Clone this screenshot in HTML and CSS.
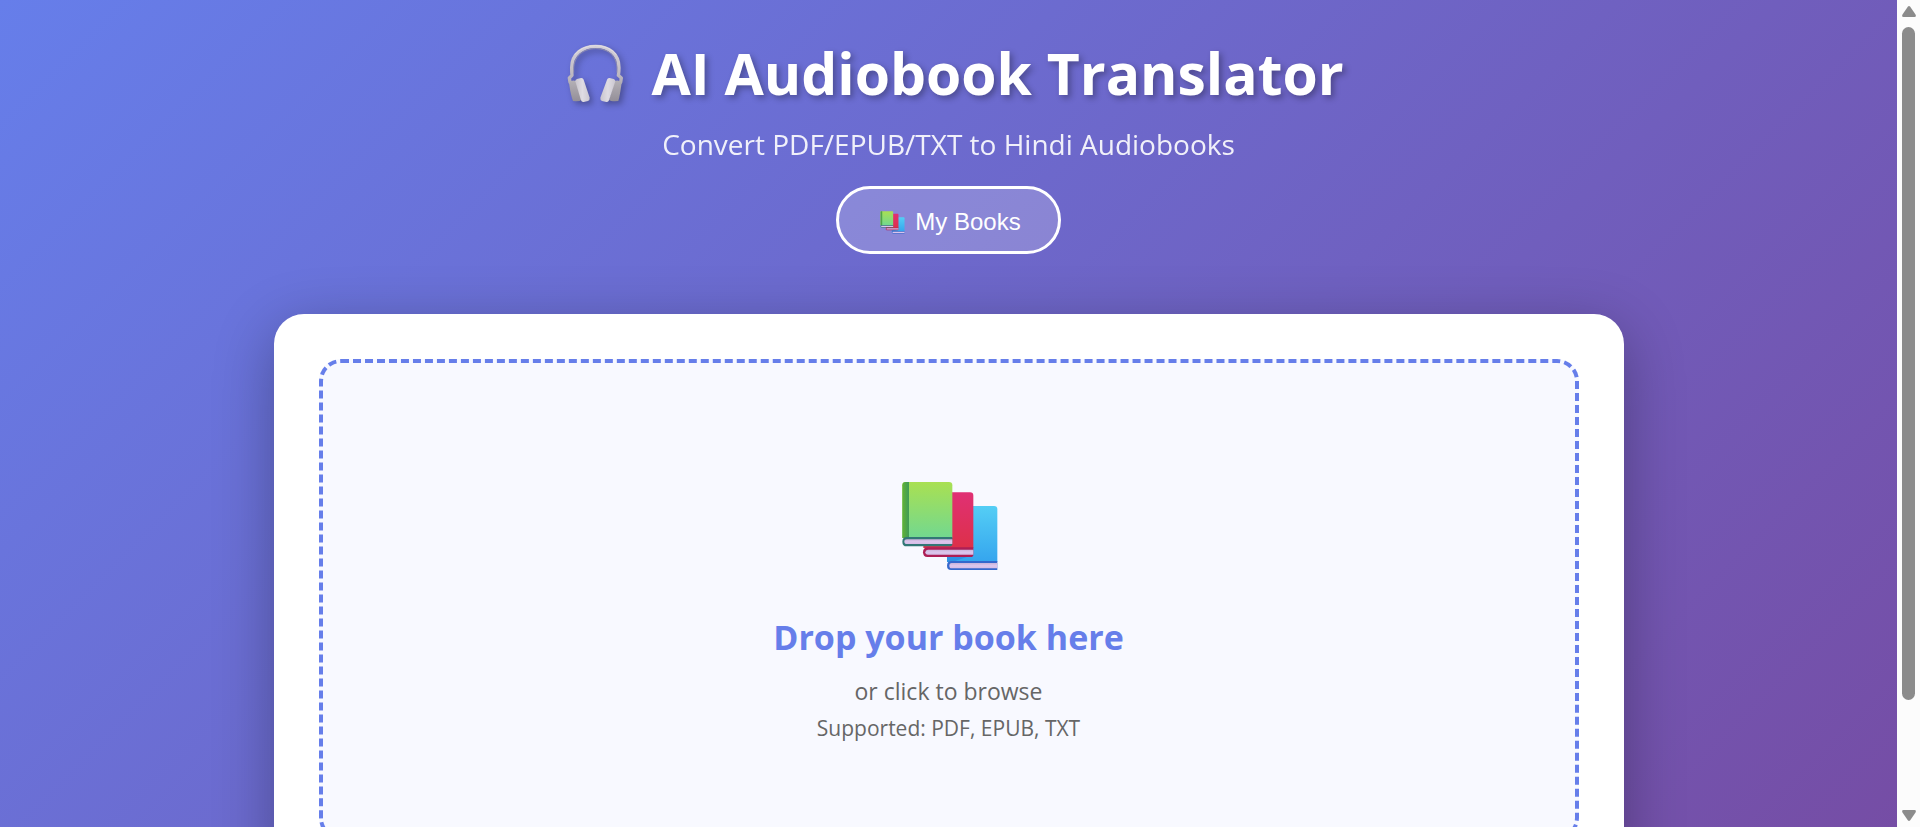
FILE: index.html
```html
<!DOCTYPE html>
<html lang="en">
<head>
<meta charset="utf-8">
<meta name="viewport" content="width=device-width, initial-scale=1">
<title>AI Audiobook Translator</title>
<link rel="stylesheet" href="styles.css">
</head>
<body>
<svg class="defs" aria-hidden="true">
  <defs>
    <linearGradient id="green" x1="0" y1="0" x2="0" y2="1"><stop offset="0" stop-color="#a9e052"/><stop offset="1" stop-color="#72d890"/></linearGradient>
    <linearGradient id="green-spine" x1="0" y1="0" x2="1" y2="0"><stop offset="0" stop-color="#62b236"/><stop offset="1" stop-color="#3f9b57"/></linearGradient>
    <linearGradient id="red" x1="0" y1="0" x2="0" y2="1"><stop offset="0" stop-color="#e03074"/><stop offset="1" stop-color="#dd3049"/></linearGradient>
    <linearGradient id="blue" x1="0" y1="0" x2="0" y2="1"><stop offset="0" stop-color="#54cef5"/><stop offset="1" stop-color="#35a5ee"/></linearGradient>
    <linearGradient id="pages" x1="0" y1="0" x2="0" y2="1"><stop offset="0" stop-color="#c9b3da"/><stop offset=".5" stop-color="#dcc6ec"/><stop offset="1" stop-color="#d5bce6"/></linearGradient>
    <linearGradient id="band" x1="0" y1="0" x2="0" y2="1"><stop offset="0" stop-color="#d3ced6"/><stop offset=".5" stop-color="#c9c4cb"/><stop offset="1" stop-color="#b5b0b8"/></linearGradient>
    <linearGradient id="cup" x1="0" y1="0" x2="0" y2="1"><stop offset="0" stop-color="#b4b0b6"/><stop offset="1" stop-color="#948f98"/></linearGradient>
    <linearGradient id="pad" x1="0" y1="0" x2="1" y2="0"><stop offset="0" stop-color="#c9c5cd"/><stop offset=".5" stop-color="#dfdce3"/><stop offset="1" stop-color="#cbc7d0"/></linearGradient>
    <symbol id="books" overflow="visible">
      <path fill="url(#blue)" d="M200 138H341q10 0 10 10V306H200z"/>
      <path fill="#2a84dc" opacity=".6" d="M200 290H262L215 306H200z"/>
      <path fill="#3568cc" d="M212 303H351V330H212q-12 0-12-13t12-14z"/>
      <path fill="url(#pages)" d="M214 309H351V325H214q-7 0-7-8t7-8z"/>
      <path fill="url(#red)" d="M129 97H269q10 0 10 10V264H129z"/>
      <path fill="#ad1f55" d="M141 262H279V284q0 7-8 7H141q-13 0-13-14t13-15z"/>
      <path fill="url(#pages)" d="M143 269H279V284H143q-8 0-8-7t8-8z"/>
      <path fill="url(#green)" d="M66 76q0-10 10-10H206q10 0 10 10V234H66z"/>
      <path fill="url(#green-spine)" d="M66 76q0-10 10-10H86V234H66z"/>
      <path fill="#327776" d="M79 231H216V252q0 7-8 7H79q-13 0-13-14t13-14z"/>
      <path fill="url(#pages)" d="M80 238H216V252H80q-8 0-8-7t8-7z"/>
    </symbol>
  </defs>
</svg>

<div class="window">
  <div class="viewport">
    <div class="page">
      <header class="header">
        <h1 class="title">
          <svg class="title-icon" viewBox="-6 -15 246 240" aria-hidden="true">
            <g fill="none" stroke-linecap="round" stroke-linejoin="round">
              <path stroke="url(#band)" stroke-width="10" d="M45 142L43 129L51 121Q50 112 50 98C50 57 82 34 122 34S192 57 192 98Q192 112 190 121L199 129L197 142"/>
              <path stroke="#a19ba4" stroke-width="2" d="M56 112C52 64 84 41 122 41S190 64 186 112"/>
              <path stroke="#e2dfe5" stroke-width="3" d="M60 58Q82 32 122 32T183 58"/>
            </g>
            <path fill="url(#cup)" d="M42 143Q50 134 63 138L80 194Q74 200 54 198Q47 180 42 143z"/>
            <path fill="url(#cup)" d="M200 143Q192 134 179 138L162 194Q168 200 190 198Q195 180 200 143z"/>
            <path fill="url(#pad)" d="M61 139Q60 134 66 132L78 129Q84 128 86 134L104 188Q105 195 99 198L86 201Q80 202 78 196Z"/>
            <path fill="url(#pad)" d="M181 139Q182 134 176 132L164 129Q158 128 156 134L136 188Q135 195 141 198L154 201Q160 202 162 196Z"/>
          </svg>
          AI Audiobook Translator
        </h1>
        <p class="subtitle">Convert PDF/EPUB/TXT to Hindi Audiobooks</p>
        <button class="books-button" type="button">
          <svg class="books-button-icon" viewBox="12 -8 404 404" aria-hidden="true"><use href="#books"/></svg>
          My Books
        </button>
      </header>

      <main class="card">
        <label class="dropzone" for="book-file">
          <svg class="dropzone-icon" viewBox="8 -21 396 384" aria-hidden="true"><use href="#books"/></svg>
          <span class="dropzone-title">Drop your book here</span>
          <span class="dropzone-text">or click to browse</span>
          <span class="dropzone-hint">Supported: PDF, EPUB, TXT</span>
          <input class="file-input" id="book-file" type="file" accept=".pdf,.epub,.txt">
        </label>
      </main>
    </div>
  </div>

  <div class="scrollbar" aria-hidden="true">
    <svg class="arrow" viewBox="0 0 14 11"><path d="M5.8 .8Q7 -.6 8.2 .8L13.5 8.5Q14.6 11 12.500 11H1.500Q-.6 11 .5 8.500Z"/></svg>
    <div class="track"><div class="thumb"></div></div>
    <svg class="arrow" viewBox="0 0 14 11"><path d="M5.800 10.200Q7 11.600 8.200 10.200L13.500 2.500Q14.600 0 12.500 0H1.500Q-.6 0 .5 2.500Z"/></svg>
  </div>
</div>
</body>
</html>
```

FILE: styles.css
```css
* {
  box-sizing: border-box;
  margin: 0;
  padding: 0;
}

body {
  font-family: "Segoe UI", "Open Sans", sans-serif;
  overflow: hidden;
}

.defs {
  position: absolute;
  width: 0;
  height: 0;
}

.window {
  display: grid;
  grid-template-columns: 1fr 23px;
  height: 100vh;
}

.viewport {
  overflow: hidden;
}

.page {
  min-height: 100%;
  padding: 30px 30px 60px;
  background: linear-gradient(135deg, #667eea 0%, #764ba2 100%);
}

.header {
  display: flex;
  flex-direction: column;
  align-items: center;
  margin-bottom: 60px;
  color: #fff;
  text-align: center;
}

.title {
  display: flex;
  align-items: flex-start;
  gap: 16px;
  margin-bottom: 8px;
  font-size: 57px;
  line-height: 86px;
  font-weight: 700;
  text-shadow: 3px 3px 6px rgba(0, 0, 0, 0.3);
}

.title-icon {
  width: 82px;
  height: 80px;
  filter: drop-shadow(3px 3px 3px rgba(0, 0, 0, 0.3));
}

.subtitle {
  margin-bottom: 22px;
  font-size: 28px;
  line-height: 40px;
  opacity: 0.9;
}

.books-button {
  display: flex;
  align-items: center;
  gap: 5px;
  padding: 15px 37px 12px;
  border: 3px solid #fff;
  border-radius: 38px;
  background: rgba(255, 255, 255, 0.2);
  color: #fff;
  font-family: Arial, "Liberation Sans", sans-serif;
  font-size: 24px;
  line-height: 35px;
  cursor: pointer;
}

.books-button-icon {
  width: 34px;
  height: 34px;
}

.card {
  max-width: 1350px;
  margin: 0 auto;
  padding: 45px;
  border-radius: 30px;
  background: #fff;
  box-shadow: 0 15px 60px rgba(0, 0, 0, 0.3);
}

.dropzone {
  display: flex;
  flex-direction: column;
  align-items: center;
  padding: 90px 30px 92px;
  border: 4px dashed #667eea;
  border-radius: 22px;
  background: #f8f9ff;
  color: #666;
  text-align: center;
  cursor: pointer;
}

.dropzone-icon {
  width: 132px;
  height: 128px;
  margin-bottom: 32px;
}

.dropzone-title {
  margin-bottom: 14px;
  color: #667eea;
  font-size: 34px;
  line-height: 48px;
  font-weight: 700;
}

.dropzone-text {
  margin-bottom: 5px;
  font-size: 23px;
  line-height: 32px;
}

.dropzone-hint {
  font-size: 21px;
  line-height: 32px;
}

.file-input {
  position: absolute;
  width: 1px;
  height: 1px;
  opacity: 0;
}

.scrollbar {
  display: flex;
  flex-direction: column;
  align-items: center;
  gap: 10px;
  padding: 6px 5px;
  background: #fcfcfc;
}

.arrow {
  width: 14px;
  height: 11px;
  fill: #8b8b8b;
}

.track {
  flex: 1;
  width: 13px;
}

.thumb {
  height: 87%;
  border-radius: 7px;
  background: #8b8b8b;
}
```
